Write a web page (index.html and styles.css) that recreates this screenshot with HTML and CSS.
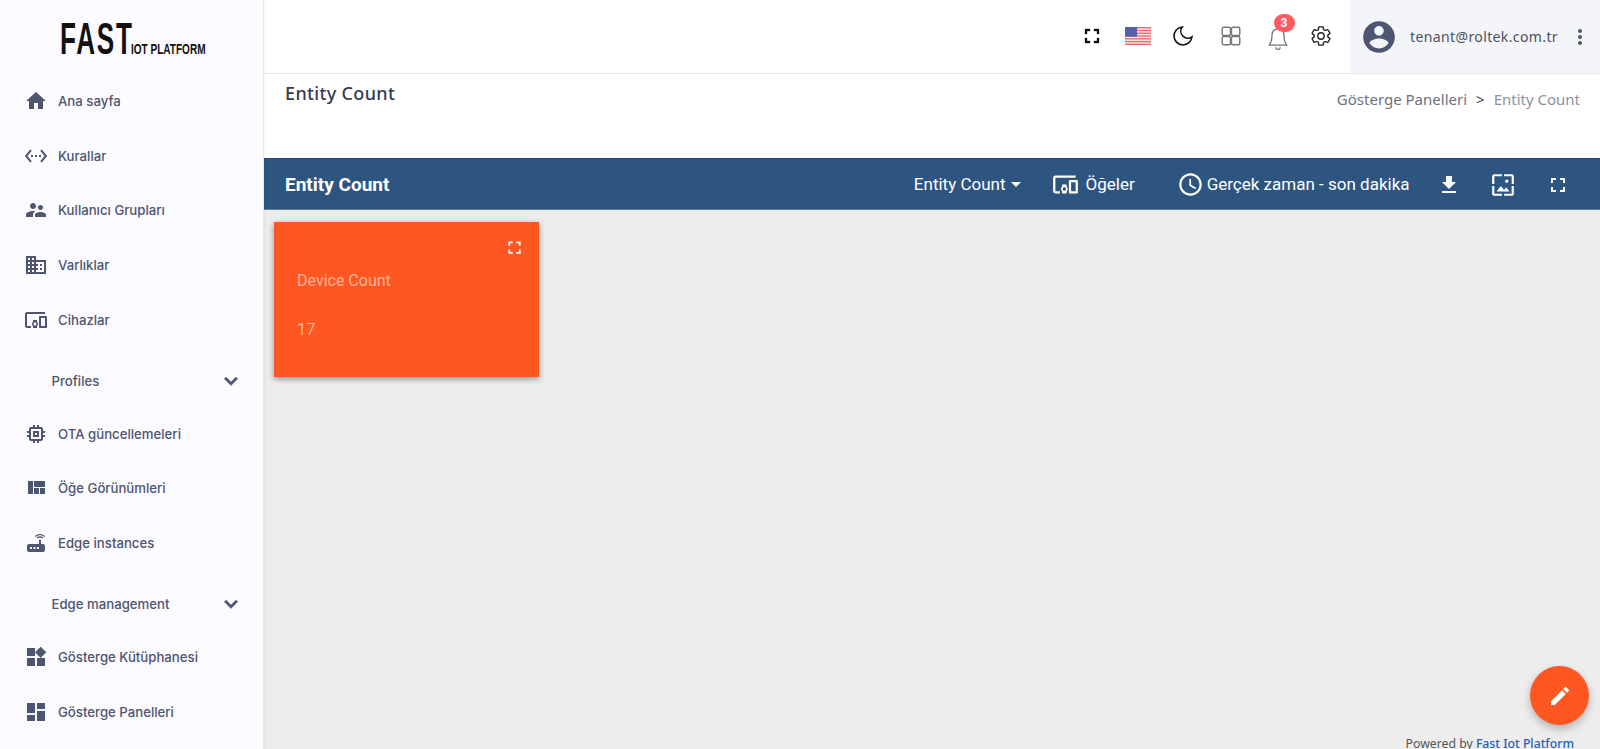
FILE: index.html
```html
<!DOCTYPE html>
<html lang="tr">
<head>
<meta charset="utf-8">
<title>Entity Count</title>
<link rel="stylesheet" href="styles.css">
</head>
<body>
<svg class="sprite" xmlns="http://www.w3.org/2000/svg">
  <symbol id="home" viewBox="0 0 24 24"><path d="M10 20v-6h4v6h5v-8h3L12 3 2 12h3v8z"/></symbol>
  <symbol id="rules" viewBox="0 0 24 24"><path d="M7.77 6.76L6.23 5.48.82 12l5.41 6.52 1.54-1.28L3.42 12l4.35-5.24zM7 13h2v-2H7v2zm10-2h-2v2h2v-2zm-6 2h2v-2h-2v2zm6.77-7.52l-1.54 1.28L20.58 12l-4.35 5.24 1.54 1.28L23.18 12l-5.41-6.52z"/></symbol>
  <symbol id="groups" viewBox="0 0 24 24"><path d="M16.5 12c1.38 0 2.49-1.12 2.49-2.5S17.88 7 16.5 7C15.12 7 14 8.12 14 9.5s1.12 2.5 2.5 2.5zM9 11c1.66 0 2.99-1.34 2.99-3S10.66 5 9 5C7.34 5 6 6.34 6 8s1.34 3 3 3zm7.5 3c-1.83 0-5.5.92-5.5 2.75V19h11v-2.25c0-1.83-3.67-2.75-5.5-2.75zM9 13c-2.33 0-7 1.17-7 3.5V19h7v-2.25c0-.85.33-2.34 2.37-3.47C10.5 13.1 9.66 13 9 13z"/></symbol>
  <symbol id="domain" viewBox="0 0 24 24"><path d="M12 7V3H2v18h20V7H12zM6 19H4v-2h2v2zm0-4H4v-2h2v2zm0-4H4V9h2v2zm0-4H4V5h2v2zm4 12H8v-2h2v2zm0-4H8v-2h2v2zm0-4H8V9h2v2zm0-4H8V5h2v2zm10 12h-8v-2h2v-2h-2v-2h2v-2h-2V9h8v10zm-2-8h-2v2h2v-2zm0 4h-2v2h2v-2z"/></symbol>
  <symbol id="devices" viewBox="0 0 24 24"><path d="M3 6h18V4H3c-1.1 0-2 .9-2 2v12c0 1.1.9 2 2 2h4v-2H3V6zm10 6H9v1.78c-.61.55-1 1.33-1 2.22s.39 1.67 1 2.22V20h4v-1.78c.61-.55 1-1.34 1-2.22s-.39-1.67-1-2.22V12zm-2 5.5c-.83 0-1.5-.67-1.5-1.5s.67-1.5 1.5-1.5 1.5.67 1.5 1.5-.67 1.5-1.5 1.5zM22 8h-6c-.5 0-1 .5-1 1v10c0 .5.5 1 1 1h6c.5 0 1-.5 1-1V9c0-.5-.5-1-1-1zm-1 10h-4v-8h4v8z"/></symbol>
  <symbol id="memory" viewBox="0 0 24 24"><path d="M15 9H9v6h6V9zm-2 4h-2v-2h2v2zm8-2V9h-2V7c0-1.1-.9-2-2-2h-2V3h-2v2h-2V3H9v2H7c-1.1 0-2 .9-2 2v2H3v2h2v2H3v2h2v2c0 1.1.9 2 2 2h2v2h2v-2h2v2h2v-2h2c1.1 0 2-.9 2-2v-2h2v-2h-2v-2h2zm-4 6H7V7h10v10z"/></symbol>
  <symbol id="quilt" viewBox="0 0 24 24"><path d="M10 18h5v-6h-5v6zm-6 0h5V5H4v13zm12 0h5v-6h-5v6zM10 5v6h11V5H10z"/></symbol>
  <symbol id="router" viewBox="0 0 24 24"><path d="M20.2 5.9l.8-.8C19.6 3.7 17.8 3 16 3s-3.6.7-5 2.1l.8.8C13 4.8 14.5 4.2 16 4.2s3 .6 4.2 1.7zm-.9.8c-.9-.9-2.1-1.4-3.3-1.4s-2.4.5-3.3 1.4l.8.8c.7-.7 1.6-1 2.5-1 .9 0 1.8.3 2.5 1l.8-.8zM19 13h-2V9h-2v4H5c-1.1 0-2 .9-2 2v4c0 1.1.9 2 2 2h14c1.1 0 2-.9 2-2v-4c0-1.1-.9-2-2-2zM8 18H6v-2h2v2zm3.5 0h-2v-2h2v2zm3.5 0h-2v-2h2v2z"/></symbol>
  <symbol id="widgets" viewBox="0 0 24 24"><path d="M13 13v8h8v-8h-8zM3 21h8v-8H3v8zM3 3v8h8V3H3zm13.66-1.31L11 7.34 16.66 13l5.66-5.66-5.66-5.65z"/></symbol>
  <symbol id="dashboard" viewBox="0 0 24 24"><path d="M3 13h8V3H3v10zm0 8h8v-6H3v6zm10 0h8V11h-8v10zm0-18v6h8V3h-8z"/></symbol>
  <symbol id="chevron" viewBox="0 0 24 24"><path d="M16.59 8.59L12 13.17 7.41 8.59 6 10l6 6 6-6z"/></symbol>
  <symbol id="fullscreen" viewBox="0 0 24 24"><path d="M7 14H5v5h5v-2H7v-3zm-2-4h2V7h3V5H5v5zm12 7h-3v2h5v-5h-2v3zM14 5v2h3v3h2V5h-5z"/></symbol>
  <symbol id="download" viewBox="0 0 24 24"><path d="M19 9h-4V3H9v6H5l7 7 7-7zM5 18v2h14v-2H5z"/></symbol>
  <symbol id="wallpaper" viewBox="0 0 24 24"><path d="M4 4h7V2H4c-1.1 0-2 .9-2 2v7h2V4zm6 9l-4 5h12l-3-4-2.03 2.71L10 13zm7-4.5c0-.83-.67-1.5-1.5-1.5S14 7.67 14 8.5s.67 1.5 1.5 1.5S17 9.33 17 8.5zM20 2h-7v2h7v7h2V4c0-1.1-.9-2-2-2zm0 18h-7v2h7c1.1 0 2-.9 2-2v-7h-2v7zM4 13H2v7c0 1.1.9 2 2 2h7v-2H4v-7z"/></symbol>
  <symbol id="schedule" viewBox="0 0 24 24"><path d="M11.99 2C6.47 2 2 6.48 2 12s4.47 10 9.99 10C17.52 22 22 17.52 22 12S17.52 2 11.99 2zM12 20c-4.42 0-8-3.58-8-8s3.58-8 8-8 8 3.58 8 8-3.58 8-8 8zm.5-13H11v6l5.25 3.15.75-1.23-4.5-2.67z"/></symbol>
  <symbol id="edit" viewBox="0 0 24 24"><path d="M3 17.25V21h3.75L17.81 9.94l-3.75-3.75L3 17.25zM20.71 7.04c.39-.39.39-1.02 0-1.41l-2.34-2.34c-.39-.39-1.02-.39-1.41 0l-1.83 1.83 3.75 3.75 1.83-1.83z"/></symbol>
  <symbol id="account" viewBox="0 0 24 24"><path d="M12 2C6.48 2 2 6.48 2 12s4.48 10 10 10 10-4.48 10-10S17.52 2 12 2zm0 3c1.66 0 3 1.34 3 3s-1.34 3-3 3-3-1.34-3-3 1.34-3 3-3zm0 14.2c-2.5 0-4.71-1.28-6-3.22.03-1.99 4-3.08 6-3.08 1.99 0 5.97 1.09 6 3.08-1.29 1.94-3.5 3.22-6 3.22z"/></symbol>
  <symbol id="more" viewBox="0 0 24 24"><path d="M12 8c1.1 0 2-.9 2-2s-.9-2-2-2-2 .9-2 2 .9 2 2 2zm0 2c-1.1 0-2 .9-2 2s.9 2 2 2 2-.9 2-2-.9-2-2-2zm0 6c-1.1 0-2 .9-2 2s.9 2 2 2 2-.9 2-2-.9-2-2-2z"/></symbol>
</svg>

<div class="app">
  <aside class="sidebar">
    <div class="logo">
      <svg class="logo-svg" width="200" height="36" viewBox="0 0 200 36" xmlns="http://www.w3.org/2000/svg">
        <g transform="scale(.58 1)"><text x="0" y="34" class="logo-big">FAST</text></g>
        <g transform="scale(.67 1)"><text x="106" y="34" class="logo-small">IOT PLATFORM</text></g>
      </svg>
    </div>
    <nav class="nav">
      <a class="nav-item"><svg class="ico"><use href="#home"/></svg><span>Ana sayfa</span></a>
      <a class="nav-item"><svg class="ico"><use href="#rules"/></svg><span>Kurallar</span></a>
      <a class="nav-item"><svg class="ico"><use href="#groups"/></svg><span>Kullanıcı Grupları</span></a>
      <a class="nav-item"><svg class="ico"><use href="#domain"/></svg><span>Varlıklar</span></a>
      <a class="nav-item"><svg class="ico"><use href="#devices"/></svg><span>Cihazlar</span></a>
      <a class="nav-group"><span>Profiles</span><svg class="ico chev"><use href="#chevron"/></svg></a>
      <a class="nav-item"><svg class="ico"><use href="#memory"/></svg><span>OTA güncellemeleri</span></a>
      <a class="nav-item"><svg class="ico"><use href="#quilt"/></svg><span>Öğe Görünümleri</span></a>
      <a class="nav-item"><svg class="ico"><use href="#router"/></svg><span>Edge instances</span></a>
      <a class="nav-group"><span>Edge management</span><svg class="ico chev"><use href="#chevron"/></svg></a>
      <a class="nav-item"><svg class="ico"><use href="#widgets"/></svg><span>Gösterge Kütüphanesi</span></a>
      <a class="nav-item"><svg class="ico"><use href="#dashboard"/></svg><span>Gösterge Panelleri</span></a>
    </nav>
  </aside>

  <main class="main">
    <header class="topbar">
      <div class="top-actions">
        <span class="top-btn"><svg class="ico ico-black"><use href="#fullscreen"/></svg></span>
        <span class="top-btn">
          <svg class="flag" width="26" height="18" viewBox="0 0 26 18" xmlns="http://www.w3.org/2000/svg">
            <rect width="26" height="18" fill="#fbeaea"/>
            <rect y="0" width="26" height="1.4" fill="#ec6a70"/>
            <rect y="2.8" width="26" height="1.4" fill="#ec6a70"/>
            <rect y="5.6" width="26" height="1.4" fill="#ec6a70"/>
            <rect y="8.3" width="26" height="1.4" fill="#ec6a70"/>
            <rect y="11.1" width="26" height="1.4" fill="#ec6a70"/>
            <rect y="13.9" width="26" height="1.4" fill="#ec6a70"/>
            <rect y="16.6" width="26" height="1.4" fill="#ec6a70"/>
            <rect width="12" height="9.7" fill="#5560a8"/>
          </svg>
        </span>
        <span class="top-btn">
          <svg class="line-ico moon" width="24" height="24" viewBox="0 0 24 24"><path d="M21 12.79A9 9 0 1 1 11.21 3 7 7 0 0 0 21 12.79z"/></svg>
        </span>
        <span class="top-btn">
          <svg class="line-ico apps" width="20" height="20" viewBox="0 0 20 20"><rect x="1.2" y="1.2" width="8.300" height="8.300" rx="1.500"/><rect x="10.500" y="1.2" width="8.300" height="8.300" rx="1.500"/><rect x="1.2" y="10.500" width="8.300" height="8.300" rx="1.500"/><rect x="10.500" y="10.500" width="8.300" height="8.300" rx="1.500"/></svg>
        </span>
        <span class="top-btn">
          <svg class="line-ico bell" width="26" height="26" viewBox="0 0 24 24"><path d="M12 3.500c-3.600 0-5.600 2.800-5.600 6.700 0 4.600-.7 6.200-2.400 8.300h16c-1.700-2.100-2.400-3.700-2.400-8.300C17.600 6.300 15.600 3.500 12 3.500zM10 20.500a2 2 0 0 0 4 0"/></svg>
          <span class="badge">3</span>
        </span>
        <span class="top-btn">
          <svg class="line-ico gear" width="22" height="22" viewBox="0 0 24 24"><path d="M19.43 12.98c.04-.32.07-.64.07-.98s-.03-.66-.07-.98l2.11-1.65c.19-.15.24-.42.12-.64l-2-3.46c-.12-.22-.39-.3-.61-.22l-2.49 1c-.52-.4-1.08-.73-1.69-.98l-.38-2.65C14.46 2.18 14.25 2 14 2h-4c-.25 0-.46.18-.49.42l-.38 2.65c-.61.25-1.17.59-1.69.98l-2.49-1c-.23-.09-.49 0-.61.22l-2 3.46c-.13.22-.07.49.12.64l2.11 1.65c-.04.32-.07.65-.07.98s.03.66.07.98l-2.11 1.65c-.19.15-.24.42-.12.64l2 3.46c.12.22.39.3.61.22l2.49-1c.52.4 1.08.73 1.69.98l.38 2.65c.03.24.24.42.49.42h4c.25 0 .46-.18.49-.42l.38-2.65c.61-.25 1.17-.59 1.69-.98l2.49 1c.23.09.49 0 .61-.22l2-3.46c.12-.22.07-.49-.12-.64l-2.11-1.65z"/><circle cx="12" cy="12" r="3.500"/></svg>
        </span>
      </div>
      <div class="user">
        <svg class="avatar"><use href="#account"/></svg>
        <span class="email">tenant@roltek.com.tr</span>
        <svg class="ico dots"><use href="#more"/></svg>
      </div>
    </header>

    <section class="page-title">
      <h1>Entity Count</h1>
      <div class="crumbs"><span>Gösterge Panelleri</span><span class="sep">&gt;</span><span class="crumb-last">Entity Count</span></div>
    </section>

    <section class="toolbar">
      <div class="tb-title">Entity Count</div>
      <div class="tb-select">Entity Count<span class="caret"></span></div>
      <div class="tb-widgets"><svg class="ico ico-dev"><use href="#devices"/></svg><span>Öğeler</span></div>
      <div class="tb-time"><svg class="ico ico-clock"><use href="#schedule"/></svg><span>Gerçek zaman - son dakika</span></div>
      <div class="tb-icons">
        <span class="tb-btn"><svg class="ico"><use href="#download"/></svg></span>
        <span class="tb-btn"><svg class="ico ico-wall"><use href="#wallpaper"/></svg></span>
        <span class="tb-btn"><svg class="ico"><use href="#fullscreen"/></svg></span>
      </div>
    </section>

    <section class="canvas">
      <article class="card">
        <svg class="card-full"><use href="#fullscreen"/></svg>
        <div class="card-label">Device Count</div>
        <div class="card-value">17</div>
      </article>
      <button class="fab" type="button"><svg class="ico"><use href="#edit"/></svg></button>
      <div class="powered">Powered by <a>Fast Iot Platform</a></div>
    </section>
  </main>
</div>
</body>
</html>
```
FILE: styles.css
```css
* { box-sizing: border-box; }
html, body { margin: 0; padding: 0; height: 749px; overflow: hidden; background: #fff; }
body { font-family: "Inter", "Noto Sans", sans-serif; }
.sprite { display: none; }
.app { display: flex; width: 1600px; height: 749px; }
.ico { width: 24px; height: 24px; fill: currentColor; flex: none; display: block; }

/* Sidebar */
.sidebar { width: 264px; flex: none; background: #fbfbff; border-right: 1px solid #e4e4ea; box-shadow: 1px 0 2px rgba(0,0,0,.06); color: #4e5570; z-index: 2; }
.logo { height: 74px; padding: 20px 0 0 60px; }
.logo-svg { display: block; }
.logo-big { font: 700 45px "Liberation Sans", sans-serif; letter-spacing: 3px; fill: #111; }
.logo-small { font: 700 15px "Liberation Sans", sans-serif; fill: #111; }
.nav { display: flex; flex-direction: column; font-size: 13.2px; font-weight: 500; }
.nav-item { height: 54.6px; display: flex; align-items: center; gap: 10px; padding-left: 24px; }
.nav-group { height: 59.6px; padding: 8px 19px 0 51.5px; display: flex; align-items: center; justify-content: space-between; }
.chev { width: 26px; height: 26px; stroke: currentColor; stroke-width: .8; }

/* Top bar */
.main { flex: 1; min-width: 0; display: flex; flex-direction: column; }
.topbar { height: 74px; flex: none; display: flex; justify-content: flex-end; border-bottom: 1px solid #e8e8ea; background: #fff; }
.top-actions { display: flex; align-items: center; margin-right: 6px; padding-bottom: 1px; }
.top-btn { width: 46px; height: 24px; display: flex; align-items: center; justify-content: center; position: relative; }
.ico-black { color: #111; stroke: #111; stroke-width: .3; margin-left: 2px; }
.flag { margin-left: 2px; flex: none; }
.line-ico { fill: none; display: block; flex: none; }
.moon { stroke: #111; stroke-width: 1.6; }
.apps { stroke: #777; stroke-width: 1.4; margin-left: 4px; }
.bell { stroke: #777; stroke-width: 1.2; margin: 4px 0 0 6px; }
.gear { stroke: #222; stroke-width: 1.5; }
.badge { position: absolute; left: 21.5px; top: -10px; width: 21px; height: 18px; border-radius: 9px; background: #ff5a5f; color: #fff; font: 700 12px/18px "Roboto", sans-serif; text-align: center; }
.user { width: 250px; height: 73px; flex: none; background: #f4f5f8; display: flex; align-items: center; padding-left: 10px; color: #4e5570; }
.avatar { width: 38px; height: 38px; fill: #4e5570; flex: none; }
.email { font: 400 14px "Noto Sans", sans-serif; letter-spacing: .38px; margin-left: 12px; color: #4a5064; white-space: nowrap; }
.dots { margin-left: 10px; }

/* Title */
.page-title { height: 84px; flex: none; display: flex; justify-content: space-between; padding: 6px 20px 0 21px; background: #fff; }
.page-title h1 { margin: 0; font: 500 18px/26px "Noto Sans", sans-serif; letter-spacing: .35px; color: #343a50; }
.crumbs { font: 400 15px "Noto Sans", sans-serif; color: #6b7280; padding-top: 9px; display: flex; gap: 9px; }
.sep { color: #444; }
.crumb-last { color: #8b93a1; }

/* Toolbar */
.toolbar { height: 52px; flex: none; display: flex; align-items: center; background: #2e557f; border-top: 1px solid #1f4a78; border-bottom: 1px solid #5f7e9e; color: #fff; font: 400 17px "Roboto", sans-serif; padding: 0 15px 0 21px; }
.tb-title { font-weight: 700; font-size: 19px; margin-right: auto; }
.tb-select { display: flex; align-items: center; gap: 5px; margin-right: 31px; }
.caret { width: 0; height: 0; border: 5px solid transparent; border-top-color: #fff; border-bottom: 0; }
.tb-widgets { display: flex; align-items: center; gap: 7px; margin-right: 42px; }
.ico-dev { width: 27px; height: 27px; }
.tb-time { display: flex; align-items: center; gap: 3px; margin-right: 12px; }
.ico-clock { width: 27px; height: 27px; }
.tb-icons { display: flex; padding-top: 2px; }
.tb-btn { width: 54.5px; display: flex; justify-content: center; }
.ico-wall { width: 26px; height: 26px; margin-top: -1px; }

/* Canvas */
.canvas { flex: 1; position: relative; background: #ededed; padding: 12px 0 0 10px; }
.card { width: 265px; height: 155px; background: #ff5722; position: relative; box-shadow: 0 2px 6px rgba(0,0,0,.4); padding: 50px 0 0 23px; color: rgba(255,255,255,.55); font-family: "Roboto", sans-serif; }
.card-full { position: absolute; right: 14px; top: 15px; width: 21px; height: 21px; fill: #fff; }
.card-label { font-size: 16px; line-height: 18px; }
.card-value { font-size: 16.5px; line-height: 20px; margin-top: 30px; font-weight: 300; color: rgba(255,255,255,.75); }
.fab { position: absolute; left: 1266px; top: 456px; width: 59px; height: 59px; border: 0; padding: 0; border-radius: 50%; background: #ff5722; color: #fff; display: flex; align-items: center; justify-content: center; box-shadow: 0 4px 8px rgba(0,0,0,.25); }
.powered { position: absolute; right: 26px; bottom: -3px; font: 400 12.25px/16px "Noto Sans", sans-serif; color: #555; white-space: nowrap; }
.powered a { color: #1e62b8; font-weight: 500; }
```
